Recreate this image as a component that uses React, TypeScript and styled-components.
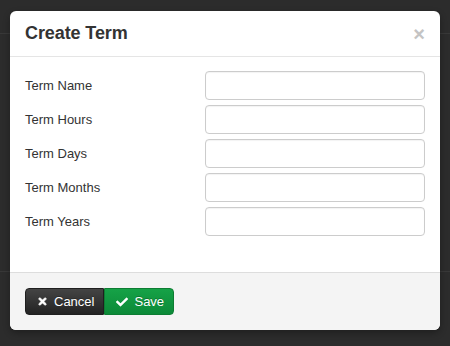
import React, { useState } from "react";
import styled, { createGlobalStyle } from "styled-components";
import { FaTimes, FaCheck } from "react-icons/fa";

const GlobalStyle = createGlobalStyle`
  html, body {
    margin: 0;
    padding: 0;
  }
  body {
    background-color: #2c2c2c;
    background-image:
      linear-gradient(#383838, #383838),
      linear-gradient(#383838, #383838);
    background-size: 100% 1px, 100% 1px;
    background-position: 0 33px, 0 271px;
    background-repeat: no-repeat;
    font-family: "Liberation Sans", Arial, Helvetica, sans-serif;
    color: #333;
    height: 346px;
    overflow: hidden;
  }
`;

const Backdrop = styled.div`
  padding: 11px 10px;
`;

const Modal = styled.div`
  width: 430px;
  background: #fff;
  border-radius: 6px;
  box-shadow: 0 3px 7px rgba(0, 0, 0, 0.3);
  overflow: hidden;
`;

const Header = styled.div`
  display: flex;
  align-items: center;
  justify-content: space-between;
  height: 45px;
  padding: 0 15px;
  border-bottom: 1px solid #e5e5e5;
`;

const Title = styled.h3`
  margin: 0;
  font-size: 18px;
  font-weight: bold;
  color: #333;
  letter-spacing: -0.1px;
`;

const Close = styled.button`
  border: 0;
  background: none;
  padding: 0;
  margin-top: 1px;
  font-family: "Liberation Sans", Arial, sans-serif;
  font-size: 20px;
  font-weight: bold;
  line-height: 20px;
  color: #c4c4c4;
  cursor: pointer;
`;

const Body = styled.div`
  display: flex;
  flex-direction: column;
  gap: 5px;
  padding: 14px 15px 36px;
`;

const Row = styled.div`
  display: grid;
  grid-template-columns: 180px 220px;
  align-items: center;
`;

const Label = styled.label`
  font-size: 13px;
  color: #333;
`;

const Input = styled.input`
  box-sizing: border-box;
  width: 220px;
  height: 29px;
  border: 1px solid #cccccc;
  border-radius: 4px;
  padding: 4px 6px;
  font-size: 13px;
  font-family: inherit;
  box-shadow: inset 0 1px 1px rgba(0, 0, 0, 0.05);
  outline: none;
`;

const Footer = styled.div`
  display: flex;
  padding: 15px;
  background: #f4f4f4;
  border-top: 1px solid #dddddd;
`;

const Group = styled.div`
  display: flex;
`;

const Btn = styled.button<{ $variant: "dark" | "green" }>`
  display: flex;
  align-items: center;
  gap: 6px;
  height: 27px;
  padding: 0 9px 0 11px;
  border: 1px solid ${(p) => (p.$variant === "dark" ? "#1f1f1f" : "#0d7d32")};
  color: #fff;
  font-family: "Liberation Sans", Arial, sans-serif;
  font-size: 13px;
  text-shadow: 0 -1px 0 rgba(0, 0, 0, 0.25);
  background: ${(p) =>
    p.$variant === "dark"
      ? "linear-gradient(#444444, #232323)"
      : "linear-gradient(#16a247, #0c8a38)"};
  border-radius: ${(p) => (p.$variant === "dark" ? "4px 0 0 4px" : "0 4px 4px 0")};
  cursor: pointer;

  svg {
    width: ${(p) => (p.$variant === "dark" ? "11px" : "12px")};
    height: ${(p) => (p.$variant === "dark" ? "11px" : "12px")};
    stroke: currentColor;
    stroke-width: ${(p) => (p.$variant === "dark" ? "30px" : "0")};
  }
`;

const fields = ["Term Name", "Term Hours", "Term Days", "Term Months", "Term Years"];

const App = () => {
  const [values, setValues] = useState<Record<string, string>>({});

  return (
    <>
      <GlobalStyle />
      <Backdrop>
        <Modal>
          <Header>
            <Title>Create Term</Title>
            <Close>×</Close>
          </Header>
          <Body>
            {fields.map((f) => (
              <Row key={f}>
                <Label>{f}</Label>
                <Input
                  value={values[f] || ""}
                  onChange={(e) => setValues({ ...values, [f]: e.target.value })}
                />
              </Row>
            ))}
          </Body>
          <Footer>
            <Group>
              <Btn $variant="dark">
                <FaTimes />
                Cancel
              </Btn>
              <Btn $variant="green">
                <FaCheck />
                Save
              </Btn>
            </Group>
          </Footer>
        </Modal>
      </Backdrop>
    </>
  );
};

export default App;
